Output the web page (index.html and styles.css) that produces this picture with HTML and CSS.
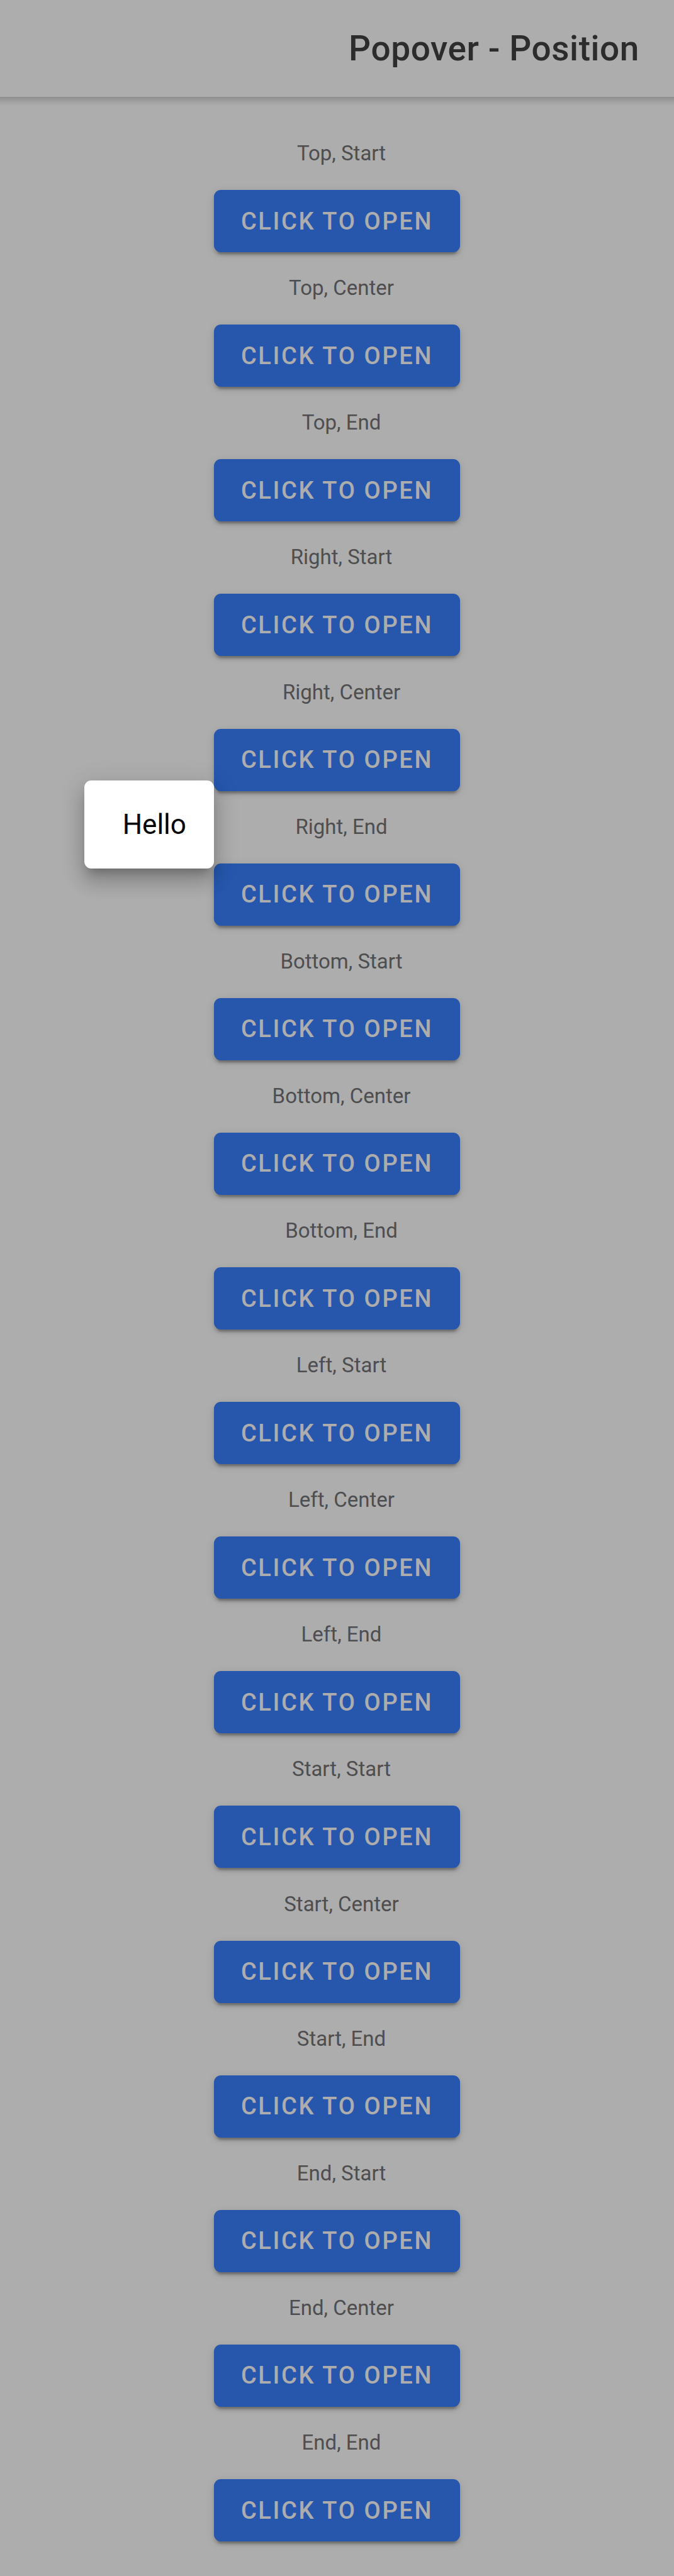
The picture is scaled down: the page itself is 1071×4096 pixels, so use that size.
FILE: index.html
```html
<!DOCTYPE html>
<html lang="en" dir="rtl">
<head>
<meta charset="utf-8">
<meta name="viewport" content="width=device-width, initial-scale=1">
<title>Popover - Position</title>
<link rel="stylesheet" href="styles.css">
</head>
<body>
<header class="toolbar"><h1 class="toolbar-title">Popover - Position</h1></header>
<main class="positions">
<section class="position"><p class="label" id="p1">Top, Start</p><button class="button" type="button" aria-describedby="p1">Click to open</button></section>
<section class="position"><p class="label" id="p2">Top, Center</p><button class="button" type="button" aria-describedby="p2">Click to open</button></section>
<section class="position"><p class="label" id="p3">Top, End</p><button class="button" type="button" aria-describedby="p3">Click to open</button></section>
<section class="position"><p class="label" id="p4">Right, Start</p><button class="button" type="button" aria-describedby="p4">Click to open</button></section>
<section class="position"><p class="label" id="p5">Right, Center</p><button class="button" type="button" aria-describedby="p5">Click to open</button></section>
<section class="position"><p class="label" id="p6">Right, End</p>
<div class="anchor"><button class="button" type="button" aria-describedby="p6">Click to open</button><div class="popover" role="dialog" aria-label="Hello">Hello</div></div></section>
<section class="position"><p class="label" id="p7">Bottom, Start</p><button class="button" type="button" aria-describedby="p7">Click to open</button></section>
<section class="position"><p class="label" id="p8">Bottom, Center</p><button class="button" type="button" aria-describedby="p8">Click to open</button></section>
<section class="position"><p class="label" id="p9">Bottom, End</p><button class="button" type="button" aria-describedby="p9">Click to open</button></section>
<section class="position"><p class="label" id="p10">Left, Start</p><button class="button" type="button" aria-describedby="p10">Click to open</button></section>
<section class="position"><p class="label" id="p11">Left, Center</p><button class="button" type="button" aria-describedby="p11">Click to open</button></section>
<section class="position"><p class="label" id="p12">Left, End</p><button class="button" type="button" aria-describedby="p12">Click to open</button></section>
<section class="position"><p class="label" id="p13">Start, Start</p><button class="button" type="button" aria-describedby="p13">Click to open</button></section>
<section class="position"><p class="label" id="p14">Start, Center</p><button class="button" type="button" aria-describedby="p14">Click to open</button></section>
<section class="position"><p class="label" id="p15">Start, End</p><button class="button" type="button" aria-describedby="p15">Click to open</button></section>
<section class="position"><p class="label" id="p16">End, Start</p><button class="button" type="button" aria-describedby="p16">Click to open</button></section>
<section class="position"><p class="label" id="p17">End, Center</p><button class="button" type="button" aria-describedby="p17">Click to open</button></section>
<section class="position"><p class="label" id="p18">End, End</p><button class="button" type="button" aria-describedby="p18">Click to open</button></section>
</main>
<div class="backdrop"></div>
</body>
</html>
```
FILE: styles.css
```css
* {
  box-sizing: border-box;
}

body {
  position: relative;
  display: flex;
  flex-direction: column;
  min-height: 100vh;
  margin: 0;
  background: #fff;
  font-family: Roboto, "Liberation Sans", sans-serif;
}

.toolbar {
  position: relative;
  display: flex;
  align-items: center;
  height: 154px;
  padding: 0 55px;
}

/* Soft shadow under the toolbar */
.toolbar::after {
  content: "";
  position: absolute;
  top: 100%;
  left: 0;
  right: 0;
  height: 14px;
  background: linear-gradient(rgba(0, 0, 0, 0.18), rgba(0, 0, 0, 0.08) 50%, rgba(0, 0, 0, 0));
}

.toolbar-title {
  margin: 0;
  color: #424242;
  font-size: 55px;
  font-weight: 500;
  letter-spacing: 0.01em;
}

.positions {
  flex: 1;
  display: grid;
  grid-auto-rows: 1fr;
  padding: 33px 0 55px;
}

.position {
  display: flex;
  flex-direction: column;
  align-items: center;
  justify-content: flex-end;
  gap: 36px;
}

.label {
  margin: 0;
  padding-left: 14px;
  color: #737478;
  font-size: 33px;
  line-height: 44px;
}

.button {
  height: 99px;
  padding: 0 43px;
  border: 0;
  border-radius: 11px;
  background: #3880ff;
  box-shadow: 0 8px 3px -5px rgba(0, 0, 0, 0.2), 0 5px 5px rgba(0, 0, 0, 0.14), 0 3px 14px rgba(0, 0, 0, 0.12);
  color: #fff;
  font-family: inherit;
  font-size: 38px;
  font-weight: 500;
  letter-spacing: 0.07em;
  text-transform: uppercase;
  direction: ltr;
}

.anchor {
  position: relative;
}

.anchor .button {
  display: block;
}

.backdrop {
  position: absolute;
  inset: 0;
  z-index: 1;
  background: rgba(0, 0, 0, 0.32);
}

.popover {
  position: absolute;
  right: 100%;
  bottom: 91px;
  z-index: 2;
  width: 206px;
  padding: 44px;
  border-radius: 11px;
  background: #fff;
  box-shadow: 0 14px 14px -8px rgba(0, 0, 0, 0.2), 0 22px 28px 3px rgba(0, 0, 0, 0.14), 0 8px 38px 5px rgba(0, 0, 0, 0.12);
  color: #000;
  font-size: 44px;
  line-height: 52px;
}
```
